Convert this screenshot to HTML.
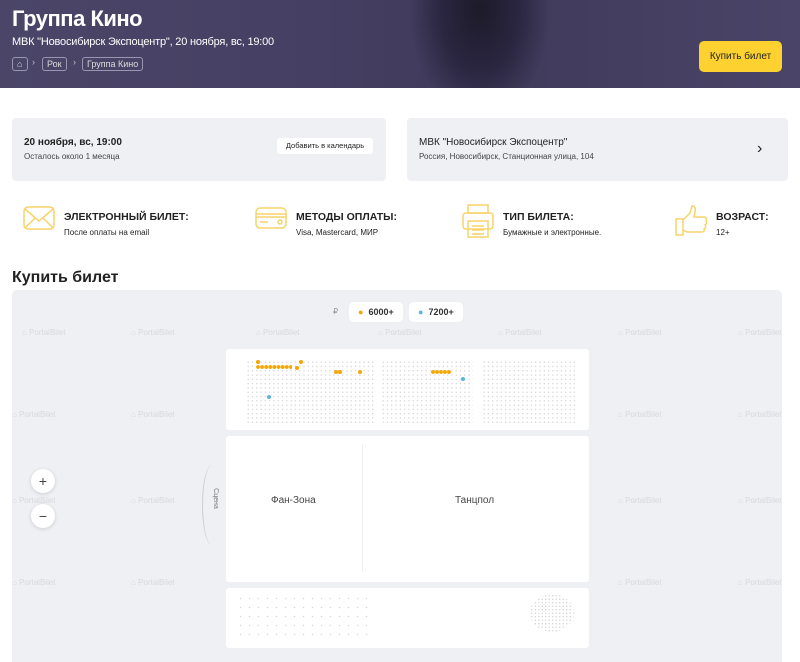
<!DOCTYPE html><html><head><meta charset="utf-8"><style>
*{margin:0;padding:0;box-sizing:border-box}
body{width:800px;height:662px;overflow:hidden;background:#fff;font-family:"Liberation Sans",sans-serif;color:#222;position:relative}
.abs{position:absolute}
.hdr{left:0;top:0;width:800px;height:88px;background:radial-gradient(ellipse 70px 110px at 480px 10px,#1d1a2a 0%,#2a2640 55%,transparent 100%),linear-gradient(90deg,#4b4668 0%,#453f63 40%,#3f3a5a 60%,#4a4468 100%)}
.tag{border:1px solid #9a96b0;border-radius:3px;color:#ddd;font-size:9px;padding:1px 4px;height:14px;line-height:11px}
.card{background:#eef0f4;border-radius:4px}
.wm{font-size:8px;color:#d6d8de}
.pill{background:#fff;border-radius:5px;height:20px;font-size:9px;font-weight:bold;color:#333;line-height:20px;padding:0 9px}
.seat{background:#fff;border-radius:3px}
.dots{background-image:radial-gradient(circle,#d4d4d4 0.5px,transparent 0.9px);background-size:4.3px 4.3px}
.o{width:4px;height:4px;border-radius:50%;background:#f5a700;position:absolute}
.b{width:4px;height:4px;border-radius:50%;background:#5bb6da;position:absolute}
.zb{width:24px;height:24px;border-radius:50%;background:#fff;box-shadow:0 1px 4px rgba(0,0,0,.15);text-align:center;line-height:24px;font-size:14px;color:#444}
</style></head><body>
<div class="abs hdr"></div>
<div class="abs" style="left:12px;top:6px;font-size:22px;font-weight:bold;color:#fff;letter-spacing:-0.5px">Группа Кино</div>
<div class="abs" style="left:12px;top:36px;font-size:11px;color:#fff;letter-spacing:-0.2px">МВК "Новосибирск Экспоцентр", 20 ноября, вс, 19:00</div>
<div class="abs tag" style="left:12px;top:57px;width:16px">⌂</div>
<div class="abs" style="left:32px;top:57px;font-size:9px;color:#bbb">›</div>
<div class="abs tag" style="left:42px;top:57px">Рок</div>
<div class="abs" style="left:73px;top:57px;font-size:9px;color:#bbb">›</div>
<div class="abs tag" style="left:82px;top:57px">Группа Кино</div>
<div class="abs" style="left:699px;top:41px;width:83px;height:31px;background:#fdd12f;border-radius:5px;font-size:10px;line-height:31px;text-align:center;color:#222">Купить билет</div>

<div class="abs card" style="left:12px;top:118px;width:374px;height:63px"></div>
<div class="abs" style="left:24px;top:137px;font-size:10px;font-weight:bold">20 ноября, вс, 19:00</div>
<div class="abs" style="left:24px;top:152px;font-size:8px;color:#444">Осталось около 1 месяца</div>
<div class="abs" style="left:277px;top:138px;width:96px;height:16px;background:#fff;border-radius:3px;font-size:7.5px;text-align:center;line-height:16px">Добавить в календарь</div>
<div class="abs card" style="left:407px;top:118px;width:381px;height:63px"></div>
<div class="abs" style="left:419px;top:137px;font-size:10px">МВК "Новосибирск Экспоцентр"</div>
<div class="abs" style="left:419px;top:152px;font-size:8px;color:#444">Россия, Новосибирск, Станционная улица, 104</div>
<div class="abs" style="left:757px;top:140px;font-size:16px;color:#222">›</div>

<svg class="abs" style="left:22px;top:205px" width="34" height="26" fill="none" stroke="#f7d46a" stroke-width="1.5"><rect x="2" y="2" width="30" height="22" rx="4"/><path d="M3 4l14 12 14-12M3 23l10-10M31 23l-10-10"/></svg>
<div class="abs" style="left:64px;top:211px;font-size:10.5px;font-weight:bold">ЭЛЕКТРОННЫЙ БИЛЕТ:</div>
<div class="abs" style="left:64px;top:228px;font-size:8px">После оплаты на email</div>
<svg class="abs" style="left:254px;top:205px" width="34" height="26" fill="none" stroke="#f7d46a" stroke-width="1.5"><rect x="2" y="3" width="30" height="20" rx="4"/><path d="M2 9h30M2 12h30M6 17h8"/><circle cx="26" cy="17" r="2"/></svg>
<div class="abs" style="left:296px;top:211px;font-size:10.5px;font-weight:bold">МЕТОДЫ ОПЛАТЫ:</div>
<div class="abs" style="left:296px;top:228px;font-size:8px">Visa, Mastercard, МИР</div>
<svg class="abs" style="left:461px;top:203px" width="34" height="36" fill="none" stroke="#f7d46a" stroke-width="1.5"><rect x="7" y="2" width="20" height="8"/><rect x="2" y="10" width="30" height="16" rx="3"/><rect x="7" y="18" width="20" height="16"/><path d="M11 23h12M11 27h12M11 31h12"/></svg>
<div class="abs" style="left:503px;top:211px;font-size:10.5px;font-weight:bold">ТИП БИЛЕТА:</div>
<div class="abs" style="left:503px;top:228px;font-size:8px">Бумажные и электронные.</div>
<svg class="abs" style="left:674px;top:205px" width="34" height="32" fill="none" stroke="#f7d46a" stroke-width="1.5"><rect x="2" y="14" width="7" height="16"/><path d="M9 15l7-7 2-7c3 0 4 3 3 6l-1 5h10c2 0 3 2 2 4v0c1 1 1 3-1 4 1 1 1 3-1 4 1 1 0 3-2 3H13l-4-2"/></svg>
<div class="abs" style="left:716px;top:211px;font-size:10.5px;font-weight:bold">ВОЗРАСТ:</div>
<div class="abs" style="left:716px;top:228px;font-size:8px">12+</div>

<div class="abs" style="left:12px;top:269px;font-size:16px;font-weight:bold;color:#222">Купить билет</div>

<div class="abs" style="left:12px;top:290px;width:770px;height:372px;background:#eff0f4;border-radius:5px 5px 0 0;overflow:hidden">
 <div class="wm abs" style="left:10px;top:38px">⌂ PortalBilet</div><div class="wm abs" style="left:119px;top:38px">⌂ PortalBilet</div><div class="wm abs" style="left:244px;top:38px">⌂ PortalBilet</div><div class="wm abs" style="left:366px;top:38px">⌂ PortalBilet</div><div class="wm abs" style="left:486px;top:38px">⌂ PortalBilet</div><div class="wm abs" style="left:606px;top:38px">⌂ PortalBilet</div><div class="wm abs" style="left:726px;top:38px">⌂ PortalBilet</div>
 <div class="wm abs" style="left:0px;top:120px">⌂ PortalBilet</div><div class="wm abs" style="left:119px;top:120px">⌂ PortalBilet</div><div class="wm abs" style="left:606px;top:120px">⌂ PortalBilet</div><div class="wm abs" style="left:726px;top:120px">⌂ PortalBilet</div>
 <div class="wm abs" style="left:0px;top:206px">⌂ PortalBilet</div><div class="wm abs" style="left:119px;top:206px">⌂ PortalBilet</div><div class="wm abs" style="left:606px;top:206px">⌂ PortalBilet</div><div class="wm abs" style="left:726px;top:206px">⌂ PortalBilet</div>
 <div class="wm abs" style="left:0px;top:288px">⌂ PortalBilet</div><div class="wm abs" style="left:119px;top:288px">⌂ PortalBilet</div><div class="wm abs" style="left:606px;top:288px">⌂ PortalBilet</div><div class="wm abs" style="left:726px;top:288px">⌂ PortalBilet</div>
 <div class="abs" style="left:321px;top:17px;font-size:8px;color:#999">₽</div>
 <div class="abs pill" style="left:337px;top:12px"><span style="color:#f5a700">●</span>&nbsp; 6000+</div>
 <div class="abs pill" style="left:397px;top:12px"><span style="color:#5bb6da">●</span>&nbsp; 7200+</div>
 <div class="abs zb" style="left:19px;top:179px">+</div>
 <div class="abs zb" style="left:19px;top:214px">−</div>
 <div class="abs" style="left:193px;top:205px;font-size:7px;color:#777;transform:rotate(90deg)">Сцена</div>
 <div class="abs" style="left:190px;top:175px;width:20px;height:80px;border-left:1px solid #ccc;border-radius:50%"></div>
</div>
<div class="abs seat" style="left:226px;top:349px;width:363px;height:81px"></div>
<div class="abs dots" style="left:246px;top:360px;width:128px;height:64px"></div>
<div class="abs dots" style="left:381px;top:360px;width:92px;height:64px"></div>
<div class="abs dots" style="left:482px;top:360px;width:96px;height:64px"></div>
<div class="abs o" style="left:256px;top:360px"></div><div class="abs o" style="left:299px;top:360px"></div>
<div class="abs" style="left:256px;top:365px;width:36px;height:4px;background:radial-gradient(circle,#f5a700 1.8px,transparent 2px);background-size:4.1px 4px"></div>
<div class="abs o" style="left:295px;top:366px"></div>
<div class="abs o" style="left:334px;top:370px"></div><div class="abs o" style="left:338px;top:370px"></div><div class="abs o" style="left:358px;top:370px"></div>
<div class="abs" style="left:431px;top:370px;width:20px;height:4px;background:radial-gradient(circle,#f5a700 1.8px,transparent 2px);background-size:4px 4px"></div>
<div class="abs b" style="left:461px;top:377px"></div><div class="abs b" style="left:267px;top:395px"></div>
<div class="abs seat" style="left:226px;top:436px;width:363px;height:146px"></div>
<div class="abs" style="left:362px;top:444px;width:1px;height:128px;background:#eee"></div>
<div class="abs" style="left:271px;top:495px;font-size:10px;color:#444">Фан-Зона</div>
<div class="abs" style="left:455px;top:495px;font-size:10px;color:#444">Танцпол</div>
<div class="abs seat" style="left:226px;top:588px;width:363px;height:60px"></div>
<div class="abs dots" style="left:236px;top:594px;width:136px;height:44px;background-size:9px 9px"></div>
<div class="abs dots" style="left:530px;top:594px;width:44px;height:38px;border-radius:50%;background-size:3.5px 3.5px"></div>
</body></html>
